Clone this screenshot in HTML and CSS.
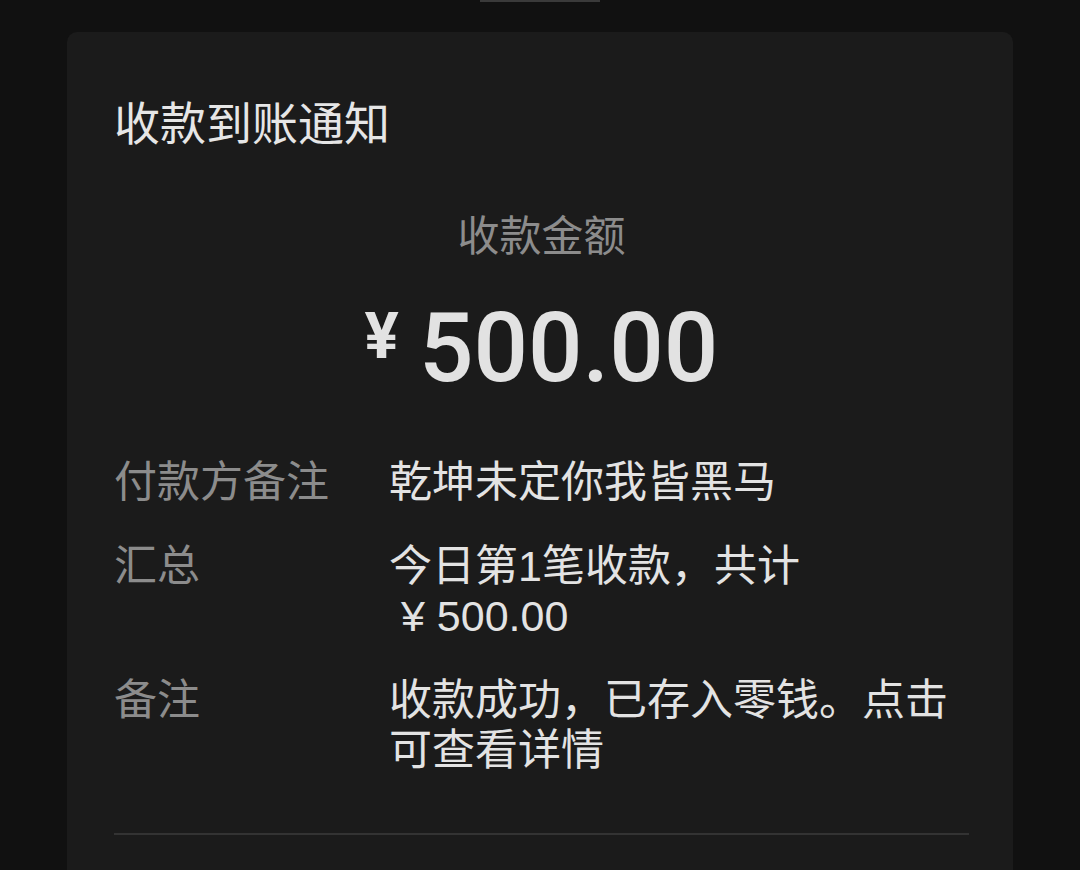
FILE: index.html
```html
<!DOCTYPE html>
<html lang="zh-CN">
<head>
  <meta charset="UTF-8" />
  <meta name="viewport" content="width=device-width, initial-scale=1.0"/>
  <title>收款到账通知</title>
  <link rel="stylesheet" href="styles.css">
</head>
<body>

  <div class="notch"></div>

  <div class="card">
    <h2 class="title">收款到账通知</h2>

    <!-- 金额 -->
    <div class="amount-label">收款金额</div>
    <div class="amount">
      <span class="yen">¥</span>
      <span class="num">500.00</span>
    </div>

    <!-- 详情 -->
    <div class="rows">
      <div class="label">付款方备注</div>
      <div class="value">乾坤未定你我皆黑马</div>

      <div class="label">汇总</div>
      <div class="value">今日第1笔收款，共计<br>&nbsp;¥ 500.00</div>

      <div class="label">备注</div>
      <div class="value">收款成功，已存入零钱。点击可查看详情</div>
    </div>

    <div class="divider"></div>

    <div class="footer">
      <span>查看账单详情</span>
      <span class="chevron">›</span>
    </div>
  </div>

</body>
</html>
```

FILE: styles.css
```css
body {
  margin: 0;
  background-color: #111;
  font-family: "Noto Sans CJK SC", "Noto Sans", sans-serif;
  height: 870px;
  overflow: hidden;
}

.notch {
  width: 120px;
  height: 2px;
  margin: 0 auto;
  background-color: #3a3a3a;
}

.card {
  width: 946px;
  height: 900px;
  margin: 30px auto 0;
  box-sizing: border-box;
  padding: 59px 44px 0 47px;
  background-color: #1b1b1b;
  border-radius: 10px;
}

.title {
  margin: 0;
  font-size: 46px;
  line-height: 58px;
  font-weight: 400;
  color: #e6e6e6;
}

.amount-label {
  margin-top: 58px;
  text-align: center;
  font-size: 42px;
  line-height: 52px;
  color: #8c8c8c;
}

.amount {
  margin-top: 34px;
  display: flex;
  justify-content: center;
  align-items: flex-start;
  color: #e2e2e2;
  font-family: Roboto, "Noto Sans", sans-serif;
}

.yen {
  font-size: 64px;
  line-height: 64px;
  font-weight: 700;
  margin-top: 12px;
  margin-right: 20px;
}

.num {
  font-size: 96px;
  line-height: 110px;
  font-weight: 500;
}

.rows {
  margin-top: 54px;
  display: grid;
  grid-template-columns: 275px 1fr;
  row-gap: 34px;
  font-family: "Liberation Sans", "Noto Sans CJK SC", sans-serif;
  font-size: 43px;
  line-height: 50px;
}

.label {
  color: #8c8c8c;
}

.value {
  color: #e3e3e3;
}

.divider {
  margin-top: 58px;
  height: 2px;
  background-color: #333;
}

.footer {
  margin-top: 28px;
  display: flex;
  justify-content: space-between;
  font-size: 42px;
  line-height: 50px;
  color: #555;
}
```
